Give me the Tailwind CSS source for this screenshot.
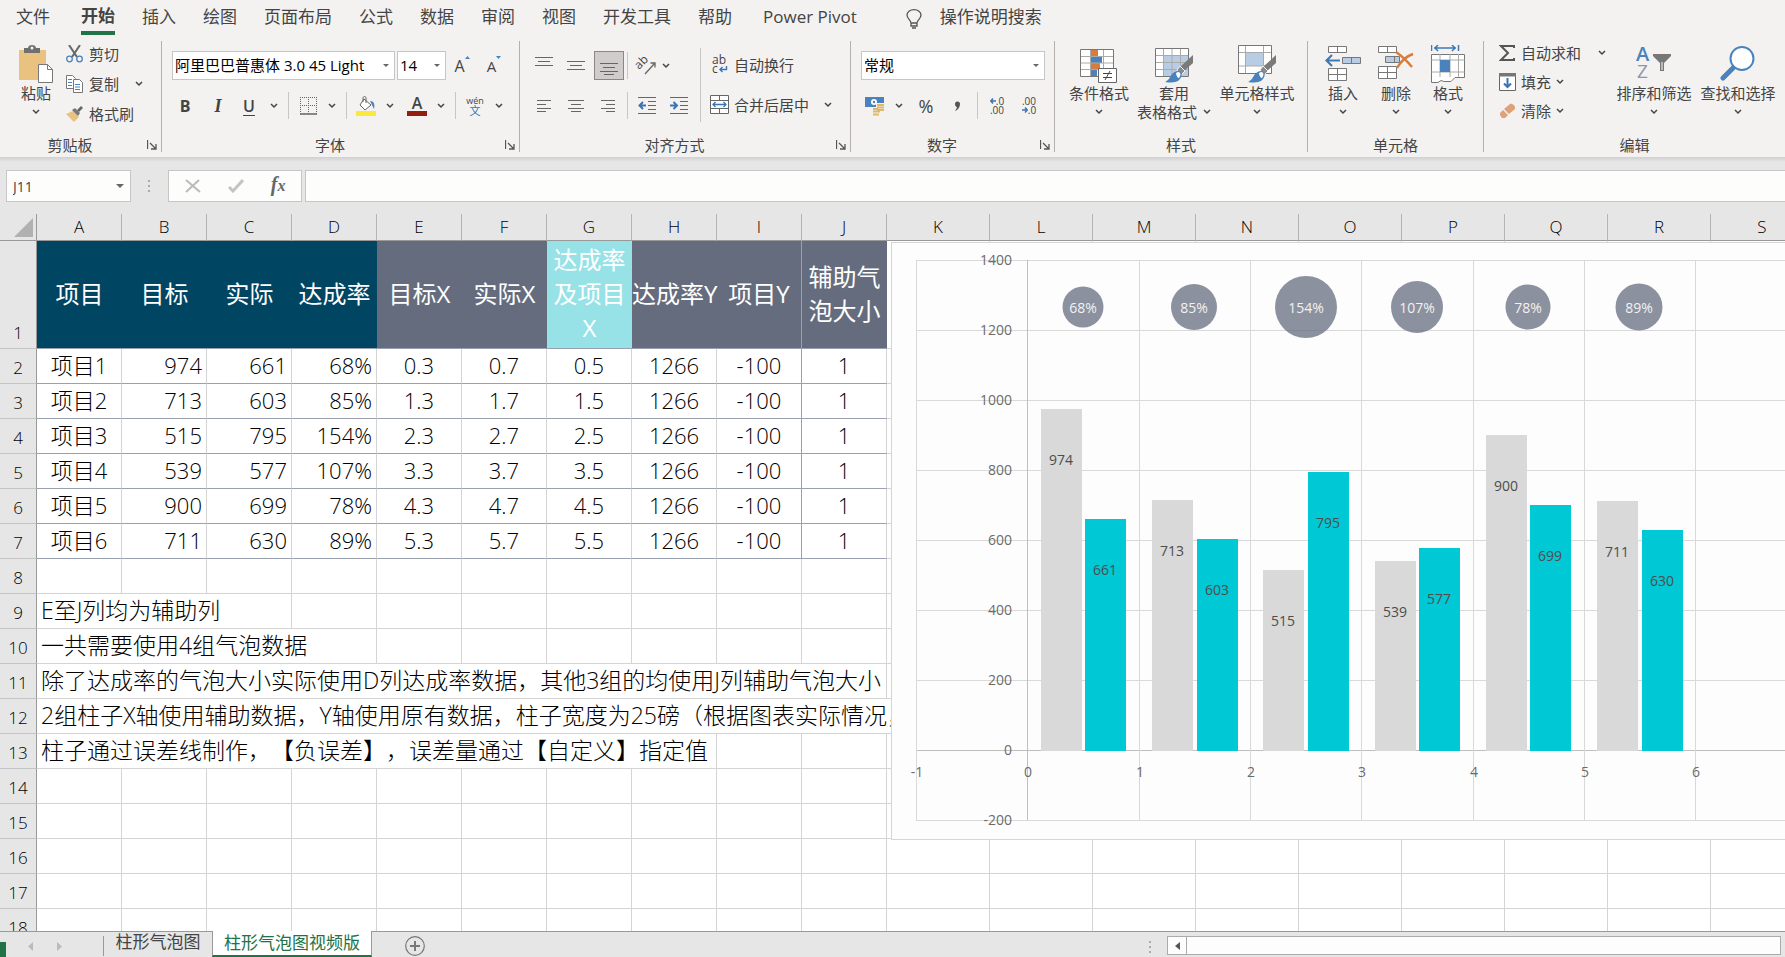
<!DOCTYPE html>
<html lang="zh-CN">
<head>
    <meta charset="UTF-8">
    <meta name="viewport" content="width=device-width, initial-scale=1.0">
    <title>柱形气泡图</title>
    <script src="https://cdn.jsdelivr.net/npm/@tailwindcss/browser@4"></script>
    <style>
        body {
            font-family: 'Open Sans', 'Noto Sans CJK SC', sans-serif;
            text-spacing-trim: space-all;
        }
    </style>
</head>
<body class="bg-[#e6e6e6] text-[#444444]">
    <!-- Shared icons -->
    <svg class="hidden">
        <symbol id="chev" viewBox="0 0 8 6"><path d="M1 1l3 3 3-3" fill="none" stroke="#444" stroke-width="1.5"/></symbol>
        <symbol id="tri" viewBox="0 0 8 4"><path d="M0 0h8L4 4z" fill="#666"/></symbol>
        <symbol id="launch" viewBox="0 0 10 10"><path d="M.5 0v9M3 3l6 6M9 4v5H4" fill="none" stroke="#555" stroke-width="1.3"/></symbol>
        <symbol id="brush" viewBox="0 0 28 28"><path d="M28 0v8l-9 8-4-4z" fill="#7a7a7a"/><path d="M15 11l5 5-4 4-4-5z" fill="#8a8a8a" stroke="#f3f2f1"/><path d="M13 16c4 0 5 4 2 8-3 4-9 4-15 3 4-2 5-5 7-8 2-2 4-3 6-3z" fill="#4a82bd"/><path d="M13 17c3 0 3 3 1 6-1 0-3-2-3-5z" fill="#fff"/></symbol>
    </svg>

    <div class="h-screen flex flex-col overflow-hidden">
        <!-- Ribbon tabs -->
        <nav class="h-[35px] shrink-0 bg-[#f3f2f1] flex items-start pl-4 gap-[27px] text-[17px] leading-[34px] whitespace-nowrap">
            <a href="#" class="mr-1">文件</a>
            <a href="#" class="font-bold border-b-4 border-[#217346] leading-[30px] pt-px h-[35px]">开始</a>
            <a href="#">插入</a>
            <a href="#">绘图</a>
            <a href="#">页面布局</a>
            <a href="#">公式</a>
            <a href="#">数据</a>
            <a href="#">审阅</a>
            <a href="#">视图</a>
            <a href="#">开发工具</a>
            <a href="#">帮助</a>
            <a href="#" class="ml-1">Power Pivot</a>
            <button class="flex items-center gap-[18px] ml-[22px]">
                <svg class="w-4 h-5 mt-1" viewBox="0 0 16 20" fill="none" stroke="#555" stroke-width="1.3"><path d="M5 14c0-3-4-4-4-8 0-3 3-5.300 7-5.300S15 3 15 6c0 4-4 5-4 8zM5 14v3h6v-3M6 19h4"/></svg>
                操作说明搜索
            </button>
        </nav>

        <!-- Ribbon -->
        <div class="h-[122px] shrink-0 bg-[#f3f2f1] flex pt-1.5 text-[15px] leading-5 whitespace-nowrap">
            <!-- Clipboard -->
            <section class="w-[162px] h-[111px] shrink-0 border-r border-[#b3b0ad] flex flex-col">
                <div class="flex-1 flex">
                    <button class="w-[52px] ml-2.5 pt-1 flex flex-col items-center">
                        <svg class="w-9 h-[38px]" viewBox="0 0 36 38"><path d="M1 5h27v30H1z" fill="#e8c27e"/><path d="M6 8V3h4c0-4 8-4 8 0h4v5z" fill="#6f6f6f"/><circle cx="14" cy="3" r="1.500" fill="#f3f2f1"/><path d="M20.500 19.500h9l5 5v13h-14z" fill="#fff" stroke="#777"/><path d="M29.500 19.500v5h5" fill="none" stroke="#777"/></svg>
                        粘贴
                        <svg class="w-2 h-1.5 mt-1.5"><use href="#chev"/></svg>
                    </button>
                    <div class="flex flex-col -mt-0.5">
                        <button class="h-[30px] flex items-center gap-1.5 pl-1">
                            <svg class="w-[17px] h-[18px]" viewBox="0 0 17 18" fill="none"><path d="M3 0l8 12M14 0L6 12" stroke="#666" stroke-width="2"/><circle cx="3.500" cy="14" r="2.800" stroke="#4a82bd" stroke-width="1.300"/><circle cx="13.500" cy="14" r="2.800" stroke="#4a82bd" stroke-width="1.300"/></svg>
                            剪切
                        </button>
                        <button class="h-[30px] flex items-center gap-1.5 pl-1">
                            <svg class="w-[17px] h-[18px]" viewBox="0 0 17 18" stroke="#777"><path d="M.5.5h6l3 3v10h-9z" fill="#fff"/><path d="M7.500 4.500h6l3 3v10h-9z" fill="#fff"/><path d="M2 4.500h4M2 7.500h4M2 10.500h4M9 9.500h5M9 12h5M9 14.500h5" stroke="#4a82bd"/></svg>
                            复制
                            <svg class="w-2 h-1.5 ml-2.5"><use href="#chev"/></svg>
                        </button>
                        <button class="h-[30px] flex items-center gap-1.5 pl-1">
                            <svg class="w-[17px] h-4" viewBox="0 0 17 16"><path d="M0 8l7-3 6 6-5 5z" fill="#e8c27e"/><path d="M6 4l3-2 5 5-2 3z" fill="#777"/><path d="M11 4l4-4 2 2-4 4z" fill="#666"/></svg>
                            格式刷
                        </button>
                    </div>
                </div>
                <div class="h-3.5 flex items-center">
                    <span class="flex-1 text-center">剪贴板</span>
                    <button class="w-[21px] pl-[7px]" aria-label="剪贴板选项"><svg class="w-2.5 h-2.5"><use href="#launch"/></svg></button>
                </div>
            </section>

            <!-- Font -->
            <section class="w-[358px] h-[111px] shrink-0 border-r border-[#b3b0ad] flex flex-col">
                <div class="flex-1 pt-2.5">
                    <div class="flex items-center pl-2.5 h-[29px]">
                        <div class="relative">
                            <select aria-label="字体" class="appearance-none block w-[223px] h-[29px] pl-[2px] pb-0.5 bg-white border border-[#c6c6c6] text-black">
                                <option>阿里巴巴普惠体 3.0 45 Light</option>
                            </select>
                            <svg class="absolute right-1.5 top-[13px] w-1.5 h-[3px]"><use href="#tri"/></svg>
                        </div>
                        <div class="relative ml-0.5">
                            <select aria-label="字号" class="appearance-none block w-[49px] h-[29px] pl-[2px] pb-0.5 bg-white border border-[#c6c6c6] text-black">
                                <option>14</option>
                            </select>
                            <svg class="absolute right-1.5 top-[13px] w-1.5 h-[3px]"><use href="#tri"/></svg>
                        </div>
                        <button class="w-8 flex justify-center items-start text-base leading-5">A<svg class="w-[5px] h-[3px]" viewBox="0 0 5 3"><path d="M0 3h5L2.500 0z" fill="#4a82bd"/></svg></button>
                        <button class="w-8 flex justify-center items-start text-[15px]">A<svg class="w-[5px] h-[3px]" viewBox="0 0 5 3"><path d="M0 0h5L2.500 3z" fill="#4a82bd"/></svg></button>
                    </div>
                    <div class="flex items-center pl-2 mt-3 h-[27px]">
                        <button class="w-[30px] text-base font-bold">B</button>
                        <button class="w-9 text-lg font-bold italic font-['Liberation_Serif']">I</button>
                        <button class="w-[26px] text-base font-semibold underline underline-offset-3">U</button>
                        <button class="w-6 flex justify-center" aria-label="下划线"><svg class="w-2 h-1.5"><use href="#chev"/></svg></button>
                        <span class="w-px h-[27px] mx-0.5 bg-[#c8c6c4]"></span>
                        <button class="w-[34px] flex justify-center" aria-label="边框"><svg class="w-[17px] h-[18px]" viewBox="0 0 17 18" fill="none" stroke="#666"><path d="M.5 0v17M8.500 0v17M16.500 0v17M0 .5h17M0 8.500h17" stroke-dasharray="1 1"/><path d="M0 17h17" stroke-width="1.500"/></svg></button>
                        <button class="w-3.5 flex justify-center" aria-label="边框选项"><svg class="w-2 h-1.5"><use href="#chev"/></svg></button>
                        <span class="w-px h-[27px] mx-[7px] bg-[#c8c6c4]"></span>
                        <button class="w-6 flex justify-center" aria-label="填充颜色"><svg class="w-5 h-5" viewBox="0 0 20 20"><path d="M0 15h20v5H0z" fill="#fce83a"/><path d="M8 3l7 6-6 5-5-5z" fill="#fff" stroke="#666"/><path d="M7 6V2c0-2 3-2 3 0v5" fill="none" stroke="#666"/><path d="M14 5c4 0 5 3 4 8l-2-4z" fill="#4a82bd"/></svg></button>
                        <button class="w-6 flex justify-center" aria-label="填充颜色选项"><svg class="w-2 h-1.5"><use href="#chev"/></svg></button>
                        <button class="w-[30px] flex flex-col items-center"><span class="text-base leading-[15px] font-semibold">A</span><span class="w-5 h-[5px] bg-[#941e0e]"></span></button>
                        <button class="w-[18px] flex justify-center" aria-label="字体颜色选项"><svg class="w-2 h-1.5"><use href="#chev"/></svg></button>
                        <span class="w-px h-[27px] mx-[5px] bg-[#c8c6c4]"></span>
                        <button class="w-7 flex flex-col items-center"><span class="text-[9px] leading-[9px]">wén</span><span class="text-[11px] leading-[11px] text-[#2e78bd]">文</span></button>
                        <button class="w-5 flex justify-center" aria-label="拼音选项"><svg class="w-2 h-1.5"><use href="#chev"/></svg></button>
                    </div>
                </div>
                <div class="h-3.5 flex items-center">
                    <span class="flex-1 text-center">字体</span>
                    <button class="w-[21px] pl-[7px]" aria-label="字体选项"><svg class="w-2.5 h-2.5"><use href="#launch"/></svg></button>
                </div>
            </section>

            <!-- Alignment -->
            <section class="w-[331px] h-[111px] shrink-0 border-r border-[#b3b0ad] flex flex-col">
                <div class="flex-1 flex pl-2">
                    <div class="w-[172px] pt-2.5">
                        <div class="flex items-center h-[29px]">
                            <button class="w-8 flex justify-center" aria-label="顶端对齐"><svg class="w-[18px] h-[18px]" stroke="#666"><path d="M0 .5h18M3 4.500h12M0 8.500h18"/></svg></button>
                            <button class="w-8 flex justify-center" aria-label="垂直居中"><svg class="w-[18px] h-[18px]" stroke="#666"><path d="M0 4.500h18M3 8.500h12M0 12.500h18"/></svg></button>
                            <button class="w-[30px] h-[29px] ml-0.5 flex justify-center items-end pb-1 bg-[#cfcccb] border border-[#8f8684]" aria-label="底端对齐"><svg class="w-[18px] h-3" stroke="#666"><path d="M0 .5h18M3 4.500h12M0 8.500h18M4 11.500h10"/></svg></button>
                            <span class="w-px h-[27px] mx-[3px] bg-[#c8c6c4]"></span>
                            <button class="w-[30px] flex justify-center" aria-label="方向"><svg class="w-[19px] h-[18px] overflow-visible" viewBox="0 0 19 18"><text x="2" y="13" transform="rotate(-45 2 13)" font-size="12" fill="#444">ab</text><path d="M8 17L18 6M13.500 6H18v4.500" fill="none" stroke="#666" stroke-width="1.300"/></svg></button>
                            <button class="w-2.5 flex justify-center" aria-label="方向选项"><svg class="w-2 h-1.5"><use href="#chev"/></svg></button>
                        </div>
                        <div class="flex items-center mt-3 h-[27px]">
                            <button class="w-8 flex justify-center" aria-label="左对齐"><svg class="w-3.5 h-3" stroke="#666"><path d="M0 .5h14M0 4.500h9M0 8.500h14M0 11.500h9"/></svg></button>
                            <button class="w-8 flex justify-center" aria-label="居中"><svg class="w-4 h-3" stroke="#666"><path d="M0 .5h16M3 4.500h10M0 8.500h16M3 11.500h10"/></svg></button>
                            <button class="w-8 flex justify-center" aria-label="右对齐"><svg class="w-3.5 h-3" stroke="#666"><path d="M0 .5h14M5 4.500h9M0 8.500h14M5 11.500h9"/></svg></button>
                            <span class="w-px h-[27px] mx-[3px] bg-[#c8c6c4]"></span>
                            <button class="w-8 flex justify-center" aria-label="减少缩进"><svg class="w-[18px] h-[17px]" fill="none"><path d="M0 .5h18M10 4.500h8M10 8.500h8M10 12.500h8M0 16.500h18" stroke="#666"/><path d="M8 8.500H1.500M5 5L1.500 8.500 5 12" stroke="#3a74b4" stroke-width="2"/></svg></button>
                            <button class="w-8 flex justify-center" aria-label="增加缩进"><svg class="w-[18px] h-[17px]" fill="none"><path d="M0 .5h18M10 4.500h8M10 8.500h8M10 12.500h8M0 16.500h18" stroke="#666"/><path d="M0 8.500h6.500M3.500 5L7 8.500 3.500 12" stroke="#3a74b4" stroke-width="2"/></svg></button>
                        </div>
                    </div>
                    <div class="border-l border-[#c8c6c4] mt-[7px] h-[74px] pt-0.5 pl-[9px]">
                        <button class="h-[29px] flex items-center gap-[5px]">
                            <svg class="w-[19px] h-[18px] overflow-visible" viewBox="0 0 19 18"><text x="2" y="8" font-size="12" fill="#444">ab</text><text x="2" y="17" font-size="12" fill="#444">c</text><path d="M16.500 10v3.500H10M12.500 11L10 13.500l2.500 2.500" fill="none" stroke="#3a74b4" stroke-width="1.400"/></svg>
                            自动换行
                        </button>
                        <button class="h-[27px] mt-3 flex items-center gap-[5px]">
                            <svg class="w-[19px] h-[19px]" viewBox="0 0 19 19" stroke="#666"><path d="M.5.5h18v18H.5zM.5 5.500h18M.5 13.500h18M9.500.5v5M9.500 13.500v5" fill="#fff"/><path d="M3 9.500h13M5.500 7L3 9.500 5.500 12M13.500 7L16 9.500 13.500 12" fill="none" stroke="#3a74b4" stroke-width="1.300"/></svg>
                            合并后居中
                            <svg class="w-2 h-1.5 ml-2.5"><use href="#chev"/></svg>
                        </button>
                    </div>
                </div>
                <div class="h-3.5 flex items-center">
                    <span class="flex-1 text-center">对齐方式</span>
                    <button class="w-[21px] pl-[7px]" aria-label="对齐选项"><svg class="w-2.5 h-2.5"><use href="#launch"/></svg></button>
                </div>
            </section>

            <!-- Number -->
            <section class="w-[204px] h-[111px] shrink-0 border-r border-[#b3b0ad] flex flex-col">
                <div class="flex-1 pt-2.5 pl-2.5">
                    <div class="relative w-[184px]">
                        <select aria-label="数字格式" class="appearance-none block w-full h-[29px] pl-[2px] pb-0.5 bg-white border border-[#c6c6c6] text-black">
                            <option>常规</option>
                        </select>
                        <svg class="absolute right-1.5 top-[13px] w-1.5 h-[3px]"><use href="#tri"/></svg>
                    </div>
                    <div class="flex items-center mt-3 h-[27px]">
                        <button class="w-7 flex justify-center" aria-label="会计数字格式"><svg class="w-5 h-5" viewBox="0 0 20 20"><path d="M0 1h19v10H0z" fill="#4a82bd"/><circle cx="9" cy="6" r="3" fill="#fff"/><circle cx="9" cy="6" r="1.200" fill="#4a82bd"/><path d="M11 7h9v10h-5v3H7v-9h4z" fill="#f3f2f1"/><path d="M12 9h7M12 11.500h7M12 14h7M8 13h5M8 15.500h7M8 18.500h6" stroke="#e0b867" stroke-width="1.800"/></svg></button>
                        <button class="w-5 flex justify-center" aria-label="会计格式选项"><svg class="w-2 h-1.5"><use href="#chev"/></svg></button>
                        <button class="w-[34px] text-lg leading-6">%</button>
                        <button class="w-7 flex justify-center" aria-label="千位分隔样式"><svg class="w-1.5 h-2.5" viewBox="0 0 6 10"><path d="M1 3a2 2 0 1 1 5 0c0 3-2 6-5 7 1-2 2-3 2-4-1 0-2-1-2-3z" fill="#555"/></svg></button>
                        <span class="w-px h-[27px] mx-1.5 bg-[#c8c6c4]"></span>
                        <button class="w-[26px] flex flex-col items-center text-[10px] leading-[9px]"><span class="flex items-center"><svg class="w-1.5 h-1.5" viewBox="0 0 6 6" fill="none" stroke="#3a74b4" stroke-width="1.500"><path d="M6 3H1M3 .5L.8 3 3 5.500"/></svg>.0</span><span>.00</span></button>
                        <button class="w-[26px] ml-1.5 flex flex-col items-center text-[10px] leading-[9px]"><span>.00</span><span class="flex items-center"><svg class="w-1.5 h-1.5" viewBox="0 0 6 6" fill="none" stroke="#3a74b4" stroke-width="1.500"><path d="M0 3h5M3 .5L5.200 3 3 5.500"/></svg>.0</span></button>
                    </div>
                </div>
                <div class="h-3.5 flex items-center">
                    <span class="flex-1 text-center">数字</span>
                    <button class="w-[21px] pl-[7px]" aria-label="数字选项"><svg class="w-2.5 h-2.5"><use href="#launch"/></svg></button>
                </div>
            </section>

            <!-- Styles -->
            <section class="w-[253px] h-[111px] shrink-0 border-r border-[#b3b0ad] flex flex-col">
                <div class="flex-1 flex pt-1 pl-2.5">
                    <button class="w-[68px] flex flex-col items-center">
                        <svg class="w-[38px] h-[38px]" viewBox="0 0 38 38"><path d="M.5 4.500h33v27H.5z" fill="#fff"/><path d="M11 5h7v6h-7zM11 18h9v6h-9z" fill="#d67d3c"/><path d="M11 12h11v6H11zM11 25h6v6h-6z" fill="#4a82bd"/><path d="M.5 11.500h33M.5 18h33M.5 24.500h33M10.500 4v27M23.500 4v27" stroke="#aaa"/><path d="M.5 4.500h33v27H.5z" fill="none" stroke="#777"/><path d="M18.500 23.500h18v14h-18z" fill="#fff" stroke="#666"/><path d="M23 28.500h9M23 32.500h9M30 26l-5 9" stroke="#444" fill="none"/></svg>
                        条件格式
                        <svg class="w-2 h-1.5 mt-1.5"><use href="#chev"/></svg>
                    </button>
                    <button class="w-[82px] flex flex-col items-center">
                        <svg class="w-[38px] h-[38px]" viewBox="0 0 38 38"><path d="M.5 3.500h33v28H.5z" fill="#fff"/><path d="M9 11h24v20H9z" fill="#b8cde3"/><path d="M.5 10.500h33M.5 17.500h33M.5 24.500h33M8.500 3v28M17 3v28M25.500 3v28" stroke="#aaa"/><path d="M.5 3.500h33v28H.5z" fill="none" stroke="#777"/><use href="#brush" x="10" y="10" width="28" height="28"/></svg>
                        <span>套用</span>
                        <span class="flex items-center gap-1.5 h-[18px]">表格格式<svg class="w-2 h-1.5"><use href="#chev"/></svg></span>
                    </button>
                    <button class="w-[84px] flex flex-col items-center">
                        <svg class="w-[38px] h-[38px]" viewBox="0 0 38 38"><path d="M.5.5h33v28H.5z" fill="#fff"/><path d="M8 8h17v13H8z" fill="#b8cde3"/><path d="M.5 7.500h33M.5 21h33M7.500 0v28M25.500 0v28" stroke="#aaa"/><path d="M.5.5h33v28H.5z" fill="none" stroke="#777"/><use href="#brush" x="10" y="10" width="28" height="28"/></svg>
                        单元格样式
                        <svg class="w-2 h-1.5 mt-1.5"><use href="#chev"/></svg>
                    </button>
                </div>
                <div class="h-3.5 flex items-center justify-center">样式</div>
            </section>

            <!-- Cells -->
            <section class="w-44 h-[111px] shrink-0 border-r border-[#b3b0ad] flex flex-col">
                <div class="flex-1 flex pt-1 pl-2">
                    <button class="w-[54px] flex flex-col items-center">
                        <svg class="w-9 h-[38px]" viewBox="0 0 36 38"><path d="M3.500 1.500h18v6h-18zM12.500 1.500v6M3.500 23.500h18v12h-18zM3.500 29.500h18M12.500 23.500v12" fill="#fff" stroke="#777"/><path d="M17.500 12.500h18v6h-18zM26.500 12.500v6" fill="#b8cde3" stroke="#777"/><path d="M15 15.500H2M7 10l-5.500 5.500L7 21" fill="none" stroke="#4078b8" stroke-width="2.200"/></svg>
                        插入
                        <svg class="w-2 h-1.5 mt-1.5"><use href="#chev"/></svg>
                    </button>
                    <button class="w-[52px] flex flex-col items-center">
                        <svg class="w-9 h-[38px]" viewBox="0 0 36 38"><path d="M.5 1.500h18v6H.5zM9.500 1.500v6M.5 21.500h18v12H.5zM.5 27.500h18M9.500 21.500v12" fill="#fff" stroke="#777"/><path d="M7.500 11.500h14v6h-14zM16.500 11.500v6" fill="#b8cde3" stroke="#777"/><path d="M18 7c6 4 11 9 16 15M35 9c-6 2-12 7-16 14" fill="none" stroke="#d67d3c" stroke-width="2.400"/></svg>
                        删除
                        <svg class="w-2 h-1.5 mt-1.5"><use href="#chev"/></svg>
                    </button>
                    <button class="w-[52px] flex flex-col items-center">
                        <svg class="w-[34px] h-[38px]" viewBox="0 0 34 38"><path d="M.5 9.500h33v23H24l-4 4h-7l-3-1-3 2H.5z" fill="#fff" stroke="#777"/><path d="M.5 15h33M.5 27h33M9 9v23M19 9v23M27.500 9v23" stroke="#aaa"/><path d="M9 15h10v12H9z" fill="#4a82bd"/><path d="M.5 0v6M27.500 0v6M3 3h22M7 0L4 3l3 3M21 0l3 3-3 3" fill="none" stroke="#4078b8" stroke-width="1.500"/></svg>
                        格式
                        <svg class="w-2 h-1.5 mt-1.5"><use href="#chev"/></svg>
                    </button>
                </div>
                <div class="h-3.5 flex items-center justify-center">单元格</div>
            </section>

            <!-- Editing -->
            <section class="flex-1 h-[111px] flex flex-col">
                <div class="flex-1 flex pl-[15px]">
                    <div class="w-[113px] flex flex-col -mt-[3px]">
                        <button class="h-[29px] flex items-center gap-[5px]">
                            <svg class="w-[17px] h-4" viewBox="0 0 17 16"><path d="M15 3V1H2l7 7-7 7h13v-2" fill="none" stroke="#555" stroke-width="2"/></svg>
                            自动求和
                            <svg class="w-2 h-1.5 ml-3"><use href="#chev"/></svg>
                        </button>
                        <button class="h-[29px] flex items-center gap-[5px]">
                            <svg class="w-[17px] h-[18px]" viewBox="0 0 17 18"><path d="M.5.500h16v17H.5z" fill="#fff" stroke="#666"/><path d="M0 0h17v3.500H0z" fill="#777"/><path d="M8.500 5v9M5 10.500L8.500 14l3.500-3.500" fill="none" stroke="#3a74b4" stroke-width="2"/></svg>
                            填充
                            <svg class="w-2 h-1.5"><use href="#chev"/></svg>
                        </button>
                        <button class="h-[29px] flex items-center gap-[5px]">
                            <svg class="w-[17px] h-4" viewBox="0 0 17 16"><path d="M5 6l6-5c2-1 6 2 5 5l-6 5z" fill="#e0a078"/><path d="M4 7l5 5-3 3H3L1 12v-2z" fill="#e0a078"/></svg>
                            清除
                            <svg class="w-2 h-1.5"><use href="#chev"/></svg>
                        </button>
                    </div>
                    <button class="w-[84px] pt-1 flex flex-col items-center">
                        <svg class="w-9 h-[38px]" viewBox="0 0 36 38"><text x="0" y="16" font-size="20" font-weight="600" fill="#4a82bd">A</text><text x="1" y="33" font-size="19" fill="#8e96ac">Z</text><path d="M17 9h18v2l-7 7v8h-4v-8l-7-7z" fill="#777"/><path d="M26 17v8" stroke="#fff"/></svg>
                        排序和筛选
                        <svg class="w-2 h-1.5 mt-1.5"><use href="#chev"/></svg>
                    </button>
                    <button class="w-[84px] pt-1 flex flex-col items-center">
                        <svg class="w-9 h-[38px]" viewBox="0 0 36 38"><path d="M14 22L3 33" stroke="#4a82bd" stroke-width="5" stroke-linecap="round"/><circle cx="22" cy="13.500" r="11.500" fill="#fff" stroke="#4a82bd" stroke-width="2"/></svg>
                        查找和选择
                        <svg class="w-2 h-1.5 mt-1.5"><use href="#chev"/></svg>
                    </button>
                </div>
                <div class="h-3.5 flex items-center justify-center">编辑</div>
            </section>
        </div>

        <!-- Formula bar -->
        <div class="h-[57px] shrink-0 flex items-start pt-[13px] pl-1.5 bg-[linear-gradient(#cfd0d2,#e6e6e6_5px)]">
            <div class="relative">
                <input type="text" aria-label="名称框" value="J11" class="block w-[125px] h-8 pl-1.5 bg-[#fdfdfc] border border-[#c6c6c6] text-sm">
                <svg class="absolute right-[7px] top-3.5 w-2 h-1"><use href="#tri"/></svg>
            </div>
            <svg class="w-[3px] h-3 mt-2.5 mx-[17px]" fill="#aaa"><path d="M0 0h2v2H0zM0 5h2v2H0zM0 10h2v2H0z"/></svg>
            <div class="w-[134px] h-8 flex items-center justify-around px-0.5 bg-[#fdfdfc] border border-[#c6c6c6]">
                <button aria-label="取消"><svg class="w-4 h-3.5" viewBox="0 0 16 14" stroke="#bbb" stroke-width="2"><path d="M1 1l14 12M14 1L1 13"/></svg></button>
                <button aria-label="输入"><svg class="w-4 h-3.5" viewBox="0 0 16 14" fill="none" stroke="#c4c4c4" stroke-width="3"><path d="M1 8l4 4L15 1"/></svg></button>
                <button class="font-['Liberation_Serif'] italic font-bold text-xl leading-5 text-[#666666]">f<span class="text-base">x</span></button>
            </div>
            <input type="text" aria-label="编辑栏" class="flex-1 h-8 ml-[3px] bg-[#fdfdfc] border border-r-0 border-[#c6c6c6]">
        </div>

        <!-- Sheet -->
        <main class="relative flex-1 overflow-hidden bg-white border-b border-[#999999]">
            <table class="table-fixed w-[1814px] border-separate border-spacing-0 text-black">
                <colgroup id="cols"></colgroup>
                <thead><tr id="col-heads"></tr></thead>
                <tbody id="rows"></tbody>
            </table>

            <!-- Floating chart -->
            <div class="absolute left-[891px] right-0 top-7 h-[598px] bg-[#fdfdfd] border border-r-0 border-[#d5d5d5] overflow-hidden">
                <svg id="chart" class="w-full h-full" font-size="14"></svg>
            </div>
        </main>

        <!-- Sheet tabs -->
        <footer class="h-[25px] shrink-0 flex items-start text-[17px] leading-5">
            <span class="w-1.5 h-[15px] mt-2.5 bg-[#217346]"></span>
            <button class="ml-[22px] mt-2.5" aria-label="上一个"><svg class="w-[5px] h-[9px]" viewBox="0 0 5 9"><path d="M5 0v9L0 4.500z" fill="#bbb"/></svg></button>
            <button class="ml-6 mt-2.5" aria-label="下一个"><svg class="w-[5px] h-[9px]" viewBox="0 0 5 9"><path d="M0 0v9l5-4.500z" fill="#bbb"/></svg></button>
            <span class="w-px h-5 mt-1 ml-[41px] bg-[#999999]"></span>
            <button class="w-[108px]">柱形气泡图</button>
            <button class="relative w-[160px] h-[26px] -mt-px bg-white border-x border-[#999999] border-b-2 border-b-[#217346] text-[#217346]">柱形气泡图视频版</button>
            <button class="ml-[33px] mt-1" aria-label="新工作表"><svg class="w-5 h-5" viewBox="0 0 20 20" fill="none" stroke="#777"><circle cx="10" cy="10" r="9.300" stroke-width="1.200"/><path d="M10 5v10M5 10h10" stroke-width="2"/></svg></button>
            <svg class="ml-auto mr-[15px] mt-[9px] w-[3px] h-3" fill="#aaa"><path d="M0 0h2v2H0zM0 5h2v2H0zM0 10h2v2H0z"/></svg>
            <div class="w-[614px] h-[19px] mt-1 mr-1 flex bg-[#fdfdfd] border border-[#ababab]">
                <button class="w-[19px] flex items-center justify-center border-r border-[#ababab]" aria-label="向左滚动"><svg class="w-[5px] h-2" viewBox="0 0 5 8"><path d="M5 0v8L0 4z" fill="#555"/></svg></button>
            </div>
        </footer>
    </div>

    <script>
        const columns = 'ABCDEFGHIJKLMNOPQRS'.split('');
        const items = [
            { name: '项目1', target: 974, actual: 661, rate: 68, r: 20.5 },
            { name: '项目2', target: 713, actual: 603, rate: 85, r: 23 },
            { name: '项目3', target: 515, actual: 795, rate: 154, r: 31 },
            { name: '项目4', target: 539, actual: 577, rate: 107, r: 26 },
            { name: '项目5', target: 900, actual: 699, rate: 78, r: 22.5 },
            { name: '项目6', target: 711, actual: 630, rate: 89, r: 23.5 }
        ];
        const heads = ['项目', '目标', '实际', '达成率', '目标X', '实际X', '达成率及项目X', '达成率Y', '项目Y', '辅助气泡大小'];
        // row number -> [columns the text runs over, text]
        const notes = {
            9: [3, 'E至J列均为辅助列'],
            10: [4, '一共需要使用4组气泡数据'],
            11: [10, '除了达成率的气泡大小实际使用D列达成率数据，其他3组的均使用J列辅助气泡大小'],
            12: [11, '2组柱子X轴使用辅助数据，Y轴使用原有数据，柱子宽度为25磅（根据图表实际情况，'],
            13: [8, '柱子通过误差线制作，【负误差】，误差量通过【自定义】指定值']
        };

        function renderSheet() {
            document.getElementById('cols').innerHTML = '<col class="w-[37px]">' +
                columns.map((c, i) => i < 10 ? '<col class="w-[85px]">' : '<col class="w-[103px]">').join('');

            document.getElementById('col-heads').innerHTML =
                '<th class="h-[27px] p-0 bg-[#e6e6e6] border-r border-b border-[#999999]"><svg class="w-[19px] h-[19px] ml-3.5" viewBox="0 0 19 19"><path d="M19 0v19H0z" fill="#b1b1b1"/></svg></th>' +
                columns.map(c => `<th class="h-[27px] p-0 bg-[#e6e6e6] border-r border-r-[#b4b4b4] border-b border-b-[#999999] text-[17px] leading-6 font-light">${c}</th>`).join('');

            const blank = n => '<td class="p-0 border-r border-b border-[#d4d4d4]"></td>'.repeat(n);
            const rowHead = n => `<th class="p-0 bg-[#e6e6e6] border-r border-r-[#999999] border-b border-b-[#c4c4c4] text-[17px] leading-[30px] font-light align-bottom">${n}</th>`;

            let html = '<tr class="h-[108px]">' + rowHead(1) + heads.map((h, i) => {
                const bg = i < 4 ? 'bg-[#004562]' : i === 6 ? 'bg-[#97e2e6]' : 'bg-[#646c7e]';
                const side = i === 8 ? 'border-r border-r-[#99a0b0]' : '';
                const wrap = h.length > 5 ? '' : 'whitespace-nowrap';
                return `<th class="px-0 pt-0 pb-0.5 ${bg} ${side} ${wrap} border-b border-b-[#99a0b0] text-white text-[24px] leading-[34px] font-normal">${h}</th>`;
            }).join('') + blank(9) + '</tr>';

            items.forEach((it, i) => {
                const cells = [it.name, it.target, it.actual, it.rate + '%', i + '.3', i + '.7', i + '.5', 1266, -100, 1];
                html += '<tr class="h-[35px]">' + rowHead(i + 2) + cells.map((v, c) => {
                    const align = c > 0 && c < 4 ? 'text-right' : 'text-center';
                    const side = c === 8 ? 'border-r-[#99a0b0]' : 'border-r-[#d4d4d4]';
                    return `<td class="pt-0 pb-[3px] pl-0 ${c > 0 && c < 4 ? 'pr-1' : 'pr-0'} ${align} border-r ${side} border-b border-b-[#99a0b0] text-[22px] leading-[30px] font-light">${v}</td>`;
                }).join('') + blank(9) + '</tr>';
            });

            for (let n = 8; n <= 18; n++) {
                const note = notes[n];
                html += '<tr class="h-[35px]">' + rowHead(n) + (note
                    ? `<td colspan="${note[0]}" class="pt-0 pb-0.5 pr-0 pl-1 border-r border-b border-[#d4d4d4] text-[23px] leading-8 font-light whitespace-nowrap">${note[1]}</td>` + blank(19 - note[0])
                    : blank(19)) + '</tr>';
            }
            document.getElementById('rows').innerHTML = html;
        }

        function renderChart() {
            const x = v => Math.round(24 + (v + 1) * 111.3);
            const y = v => Math.round(507 - v * 0.35);
            let svg = '';
            for (let v = -200; v <= 1400; v += 200) {
                svg += `<path d="M${x(-1)} ${y(v) + 0.5}H${x(7)}" stroke="${v === 0 ? '#bfbfbf' : '#d9d9d9'}"/>`;
            }
            for (let v = -1; v <= 7; v++) {
                svg += `<path d="M${x(v) + 0.5} ${y(1400)}V${y(-200)}" stroke="${v === 0 ? '#bfbfbf' : '#d9d9d9'}"/>`;
            }
            for (let v = -200; v <= 1400; v += 200) {
                svg += `<text x="120" y="${y(v) + 5}" text-anchor="end" fill="#6b6b6b">${v}</text>`;
            }
            for (let v = -1; v <= 6; v++) {
                svg += `<text x="${x(v) + 1}" y="534" text-anchor="middle" fill="#6b6b6b">${v}</text>`;
            }
            items.forEach((it, i) => {
                [[it.target, 0.3, '#d9d9d9'], [it.actual, 0.7, '#00c8d4']].forEach(([v, dx, fill]) => {
                    const cx = x(i + dx);
                    svg += `<rect x="${cx - 20}" y="${y(v)}" width="41" height="${y(0) - y(v) + 1}" fill="${fill}"/>`;
                    svg += `<text x="${cx}" y="${y(v) + 56}" text-anchor="middle" fill="#4d4d4d">${v}</text>`;
                });
                svg += `<circle cx="${x(i + 0.5)}" cy="64" r="${it.r}" fill="#646c7e" fill-opacity="0.75"/>`;
                svg += `<text x="${x(i + 0.5)}" y="70" text-anchor="middle" fill="#f2f2f2">${it.rate}%</text>`;
            });
            document.getElementById('chart').innerHTML = svg;
        }

        renderSheet();
        renderChart();
    </script>
</body>
</html>
